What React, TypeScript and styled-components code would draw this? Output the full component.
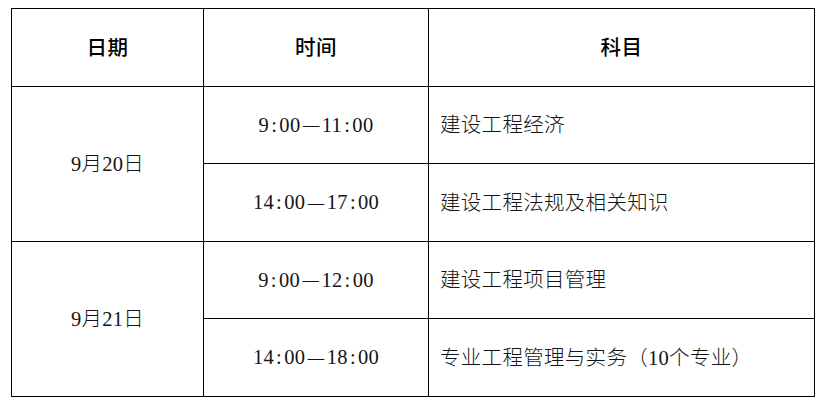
import React from "react";
import styled, { createGlobalStyle } from "styled-components";

const GlobalStyle = createGlobalStyle`
  html, body { margin: 0; padding: 0; background: #ffffff; }
  body { font-family: "Liberation Serif", "Noto Sans CJK SC", serif; color: #111; }
`;

const Page = styled.div`
  padding: 8px 0 0 11px;
`;

const Table = styled.table`
  border-collapse: collapse;
  table-layout: fixed;
  width: 804px;
  font-family: "Liberation Serif", "Noto Sans CJK SC", serif;
  font-size: 20.5px;
  color: #141414;
`;

const Col = styled.col<{ $w: number }>`
  width: ${(p) => p.$w}px;
`;

const Row = styled.tr<{ $h: number }>`
  height: ${(p) => p.$h}px;
`;

const HeadCell = styled.th`
  border: 1px solid #000;
  padding: 0 0 3px;
  text-align: center;
  vertical-align: middle;
  font-weight: 500;
  letter-spacing: 0.5px;
  color: #000;
`;

const Cell = styled.td<{ $align?: "left" | "center"; $cjk?: boolean }>`
  border: 1px solid #000;
  padding: 0 0 ${(p) => (p.$cjk ? "4px" : "0")} ${(p) => (p.$align === "left" ? "11px" : "0")};
  text-align: ${(p) => p.$align ?? "center"};
  vertical-align: middle;
  white-space: nowrap;
  letter-spacing: 0.3px;
  font-weight: 300;
`;

const Colon = styled.span`
  display: inline-block;
  width: 0.5em;
  text-align: center;
`;

const Dash = styled.span`
  display: inline-block;
  text-align: center;
  font-size: 0.8em;
  width: 1.3em;
  letter-spacing: 0;
  vertical-align: 0.08em;
`;

function Time({ from, to }: { from: string; to: string }) {
  const part = (t: string) => {
    const [h, m] = t.split(":");
    return (
      <>
        {h}
        <Colon>:</Colon>
        {m}
      </>
    );
  };
  return (
    <>
      {part(from)}
      <Dash>—</Dash>
      {part(to)}
    </>
  );
}

const days = [
  {
    date: "9月20日",
    sessions: [
      { from: "9:00", to: "11:00", subject: "建设工程经济" },
      { from: "14:00", to: "17:00", subject: "建设工程法规及相关知识" },
    ],
  },
  {
    date: "9月21日",
    sessions: [
      { from: "9:00", to: "12:00", subject: "建设工程项目管理" },
      { from: "14:00", to: "18:00", subject: "专业工程管理与实务（10个专业）" },
    ],
  },
];

const rowHeights = [77, 78, 77, 78];

export default function App() {
  let idx = 0;
  return (
    <>
      <GlobalStyle />
      <Page>
        <Table>
          <colgroup>
            <Col $w={192} />
            <Col $w={225} />
            <Col $w={386} />
          </colgroup>
          <thead>
            <Row $h={78}>
              <HeadCell>日期</HeadCell>
              <HeadCell>时间</HeadCell>
              <HeadCell>科目</HeadCell>
            </Row>
          </thead>
          <tbody>
            {days.map((d) =>
              d.sessions.map((s, i) => {
                const h = rowHeights[idx++];
                return (
                  <Row key={d.date + i} $h={h}>
                    {i === 0 && (
                      <Cell rowSpan={d.sessions.length} $cjk>
                        {d.date}
                      </Cell>
                    )}
                    <Cell>
                      <Time from={s.from} to={s.to} />
                    </Cell>
                    <Cell $align="left" $cjk>
                      {s.subject}
                    </Cell>
                  </Row>
                );
              })
            )}
          </tbody>
        </Table>
      </Page>
    </>
  );
}
